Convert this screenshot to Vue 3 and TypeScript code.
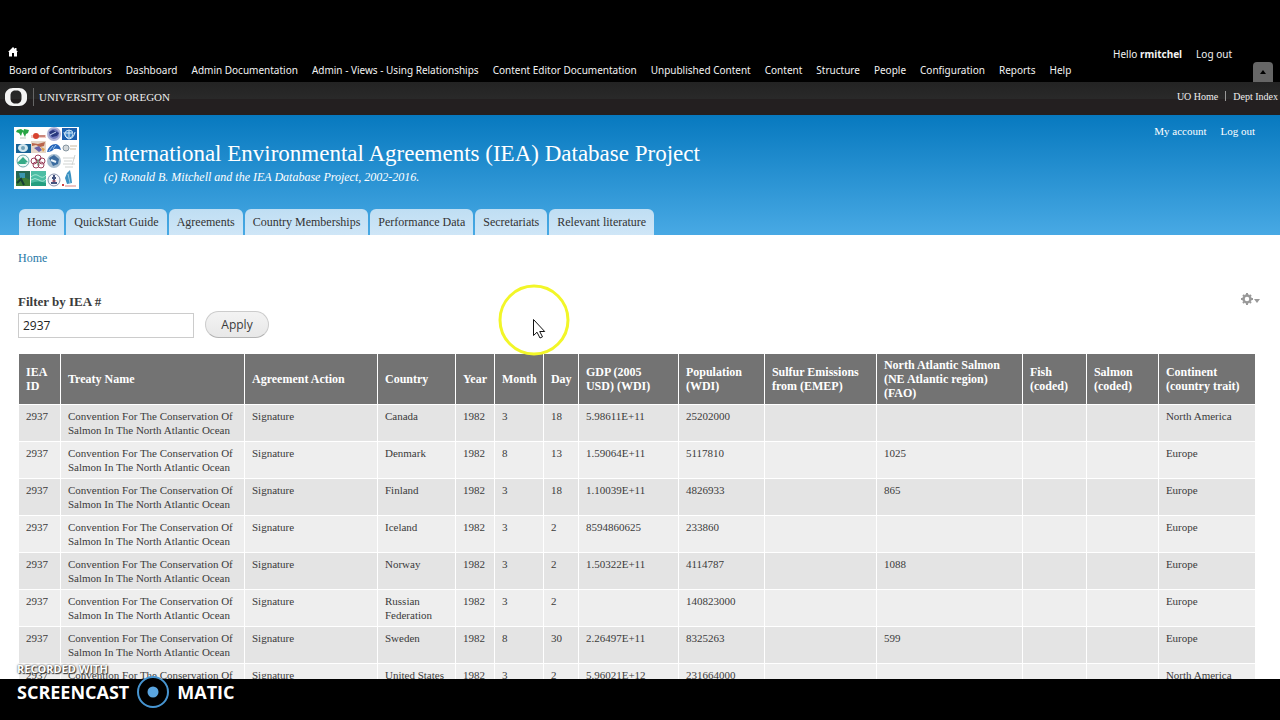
<script setup lang="ts">
import { ref } from 'vue'

interface Column {
  label: string
  width: number
}

const adminLinks: string[] = [
  'Board of Contributors', 'Dashboard', 'Admin Documentation', 'Admin - Views - Using Relationships',
  'Content Editor Documentation', 'Unpublished Content', 'Content', 'Structure', 'People',
  'Configuration', 'Reports', 'Help',
]

const tabs: string[] = [
  'Home', 'QuickStart Guide', 'Agreements', 'Country Memberships', 'Performance Data',
  'Secretariats', 'Relevant literature',
]

const columns: Column[] = [
  { label: 'IEA\nID', width: 42 },
  { label: 'Treaty Name', width: 184 },
  { label: 'Agreement Action', width: 133 },
  { label: 'Country', width: 78 },
  { label: 'Year', width: 39 },
  { label: 'Month', width: 49 },
  { label: 'Day', width: 35 },
  { label: 'GDP (2005\nUSD) (WDI)', width: 100 },
  { label: 'Population\n(WDI)', width: 86 },
  { label: 'Sulfur Emissions\nfrom (EMEP)', width: 112 },
  { label: 'North Atlantic Salmon\n(NE Atlantic region)\n(FAO)', width: 146 },
  { label: 'Fish\n(coded)', width: 64 },
  { label: 'Salmon\n(coded)', width: 72 },
  { label: 'Continent\n(country trait)', width: 97 },
]
const totalWidth = columns.reduce((sum, c) => sum + c.width, 0)

const treaty = 'Convention For The Conservation Of Salmon In The North Atlantic Ocean'

function record(country: string, month: string, day: string, gdp: string, population: string, salmon: string, continent: string): string[] {
  return ['2937', treaty, 'Signature', country, '1982', month, day, gdp, population, '', salmon, '', '', continent]
}

const rows: string[][] = [
  record('Canada', '3', '18', '5.98611E+11', '25202000', '', 'North America'),
  record('Denmark', '8', '13', '1.59064E+11', '5117810', '1025', 'Europe'),
  record('Finland', '3', '18', '1.10039E+11', '4826933', '865', 'Europe'),
  record('Iceland', '3', '2', '8594860625', '233860', '', 'Europe'),
  record('Norway', '3', '2', '1.50322E+11', '4114787', '1088', 'Europe'),
  record('Russian Federation', '3', '2', '', '140823000', '', 'Europe'),
  record('Sweden', '8', '30', '2.26497E+11', '8325263', '599', 'Europe'),
  record('United States', '3', '2', '5.96021E+12', '231664000', '', 'North America'),
]

const filter = ref('2937')
</script>

<template>
  <div class="page">
    <div class="toolbar">
      <div class="toolbar-top">
        <a href="#" class="home-link" aria-label="Home">
          <svg width="10" height="12" viewBox="0 0 10 12"><path d="M5 1 0 6h1v4.500h3V7h2v3.500h3V6h1L8.500 4.500V2H7v1z" fill="#fff" /></svg>
        </a>
        <div class="user-links">
          <a href="#">Hello <strong>rmitchel</strong></a>
          <a href="#">Log out</a>
        </div>
      </div>
      <nav class="admin-nav">
        <a v-for="link in adminLinks" :key="link" href="#">{{ link }}</a>
      </nav>
      <button class="toggle" type="button" aria-label="Hide shortcuts">
        <svg width="6" height="4" viewBox="0 0 6 4"><path d="M3 0l3 4H0z" fill="#000" /></svg>
      </button>
    </div>

    <div class="uo-bar">
      <a href="#" class="uo-brand">
        <svg class="uo-mark" width="22" height="18" viewBox="0 0 22 18">
          <path fill-rule="evenodd" fill="#f4f4f4" d="M8 0h6c4.500 0 8 3.500 8 7v4c0 3.500-3.500 7-8 7H8c-4.500 0-8-3.500-8-7V7c0-3.500 3.500-7 8-7zM10 2.500C7 2.500 5.500 5 5.500 7.500v3c0 2.500 1.500 5 4.500 5h2c3 0 4.500-2.500 4.500-5v-3c0-2.500-1.500-5-4.500-5z" />
        </svg>
        <span class="uo-name">UNIVERSITY OF OREGON</span>
      </a>
      <div class="uo-links">
        <a href="#">UO Home</a><span class="bar"></span><a href="#">Dept Index</a>
      </div>
    </div>

    <header class="header">
      <div class="account-links">
        <a href="#">My account</a>
        <a href="#">Log out</a>
      </div>
      <div class="branding">
        <svg class="site-logo" width="65" height="62" viewBox="0 0 65 62">
          <rect width="65" height="62" fill="#fff" />
          <path d="M3 3l4-1 3 2-2 2-1 3-2-3-3-1zM10 2l5 1-1 3-2 1-1 3-2-4z" fill="#27a544" />
          <path d="M6 11h6" stroke="#b9c4b9" />
          <path d="M17 8h15v3H17z" fill="#f3c9c2" /><circle cx="22" cy="9" r="3" fill="#d8422e" /><path d="M25 9h6" stroke="#a04439" />
          <circle cx="40" cy="7" r="6" fill="#7179bd" stroke="#aeb2d7" stroke-width="2" /><path d="M35 5l4-2 6 3-2 3-5 1z" fill="#29377e" /><path d="M36 8l6-3" stroke="#c4d5ef" />
          <rect x="48" y="1" width="15" height="12" fill="#1b5fae" /><circle cx="55" cy="7" r="4" fill="#3f86c9" stroke="#bfdcf2" /><path d="M50 5q1 6 5 7 5-1 6-7M55 3v7M52 6h6" fill="none" stroke="#d7ecfa" />
          <rect x="2" y="17" width="15" height="9" fill="#176295" /><ellipse cx="9" cy="21" rx="5" ry="4" fill="#d4e8ef" /><circle cx="9" cy="21" r="2" fill="#72a2b8" />
          <rect x="17" y="14" width="15" height="12" fill="#e5d6c7" /><path d="M18 16l6 1 7-2-1 4-4 1-4-2-4 1z" fill="#b9654c" /><path d="M20 21l5-2 3 4-3 2z" fill="#6a62a8" /><path d="M27 20l4 2-2 3z" fill="#e0a14e" />
          <path d="M33 25q2-8 9-8 4 1 5 6-4-2-7-1-2 3-7 3z" fill="#2766bb" /><path d="M35 24l4-5M39 22l3-4" stroke="#9cc7ec" />
          <circle cx="52" cy="21" r="3" fill="#d3d8db" stroke="#8695a0" /><path d="M56 19h7M56 22h6" stroke="#c8b99f" />
          <circle cx="9" cy="34" r="6" fill="#effaf6" stroke="#71a7ad" /><path d="M3 36l6-6 5 5-3 1 2 1H5z" fill="#35aa86" />
          <g fill="none" stroke="#9a3e5b"><circle cx="24" cy="31" r="3" /><circle cx="20" cy="34" r="3" /><circle cx="28" cy="34" r="3" /><circle cx="22" cy="38" r="3" /><circle cx="27" cy="38" r="3" /></g><path d="M24 32v6" stroke="#5b9a68" />
          <circle cx="40" cy="34" r="7" fill="#a6bdd0" /><path d="M35 31l5-3 5 4-1 5-5 2-2-4z" fill="#3b6b9f" /><path d="M37 33l5 2" stroke="#eaf3fa" stroke-width="2" />
          <path d="M49 31h12M50 34h8M49 37h12M51 40h8M61 28l-3 10" stroke="#d0d3d1" />
          <rect x="2" y="44" width="14" height="15" fill="#256752" /><path d="M2 52l6-3 8 4v6H2z" fill="#3d7c36" /><path d="M5 46h6v5H6z" fill="#3b96b0" /><path d="M3 56l4-4 3 6" fill="none" stroke="#163e36" stroke-width="2" />
          <rect x="17" y="44" width="15" height="15" fill="#4dbda4" /><path d="M17 50q4-4 8-1t7-1M17 53q4-3 8 0t7-1" fill="none" stroke="#a4e6d2" /><path d="M17 56q7-3 15 0v3H17z" fill="#249e80" />
          <circle cx="40" cy="53" r="6" fill="#f6f6fa" stroke="#8891ad" /><path d="M40 48v8M38 51h4M37 56h6" stroke="#43537f" stroke-width="2" /><path d="M38 54h4" stroke="#cc5865" />
          <path d="M53 57l-2-6 2-5 3-3 1 5 1 8z" fill="#3a91c2" /><path d="M54 47l2 9" stroke="#9ccde5" /><path d="M48 58h2" stroke="#cf3e3e" stroke-width="2" /><path d="M51 59h11" stroke="#d58585" />
        </svg>
        <div class="titles">
          <h1>International Environmental Agreements (IEA) Database Project</h1>
          <p>(c) Ronald B. Mitchell and the IEA Database Project, 2002-2016.</p>
        </div>
      </div>
      <nav class="tabs">
        <a v-for="tab in tabs" :key="tab" href="#">{{ tab }}</a>
      </nav>
    </header>

    <main class="content">
      <nav class="breadcrumb"><a href="#">Home</a></nav>
      <div class="filter-area">
        <form class="filter" @submit.prevent>
          <label for="iea-filter">Filter by IEA #</label>
          <div class="filter-row">
            <input id="iea-filter" v-model="filter" type="text">
            <button type="submit">Apply</button>
          </div>
        </form>
        <button class="gear" type="button" aria-label="Configure view">
          <svg width="20" height="12" viewBox="0 1 20 12">
            <circle cx="6" cy="7" r="3.500" fill="none" stroke="#999" stroke-width="2.500" />
            <path d="M6 1v2M6 11v2M0 7h2M10 7h2M2 3l1 1M9 10l1 1M2 11l1-1M9 4l1-1" stroke="#999" stroke-width="2" />
            <path d="M13 7h6l-3 4z" fill="#999" />
          </svg>
        </button>
      </div>

      <table>
        <colgroup>
          <col v-for="c in columns" :key="c.label" :style="{ width: (c.width / totalWidth) * 100 + '%' }">
        </colgroup>
        <thead>
          <tr><th v-for="c in columns" :key="c.label" scope="col">{{ c.label }}</th></tr>
        </thead>
        <tbody>
          <tr v-for="(row, r) in rows" :key="r">
            <td v-for="(cell, i) in row" :key="i">{{ cell }}</td>
          </tr>
        </tbody>
      </table>
    </main>

    <footer class="letterbox"></footer>

    <div class="watermark">
      <span class="recorded">RECORDED WITH</span>
      <div class="brand">
        <span>SCREENCAST</span>
        <svg width="34" height="34" viewBox="0 0 34 34">
          <circle cx="17" cy="17" r="15" fill="#000" stroke="#4795d1" stroke-width="2" />
          <circle cx="17" cy="17" r="5.500" fill="#5aa5e0" />
        </svg>
        <span>MATIC</span>
      </div>
    </div>

    <svg class="pointer" width="72" height="72" viewBox="0 0 72 72">
      <circle cx="36" cy="36" r="34" fill="none" stroke="#f2f628" stroke-width="3" />
      <path d="M35.500 35.500v16l3.500-3.300 3 5.800 2.500-1.200-2.800-5.300h5z" fill="#fff" stroke="#111" />
    </svg>
  </div>
</template>

<style>
html,
body {
  background: #000;
}
</style>

<style scoped>
.page {
  position: relative;
  display: flex;
  flex-direction: column;
  height: 100vh;
  overflow: hidden;
  box-sizing: border-box;
  padding-top: 40px;
  background: #000;
  color: #3b3b3b;
  font-family: "Liberation Serif", serif;
}

a {
  color: inherit;
  text-decoration: none;
}

button {
  margin: 0;
  cursor: pointer;
}

.toolbar {
  position: relative;
  flex: none;
  padding: 6px 48px 4px 8px;
  color: #f2f2f2;
  font: 10px/16px "Noto Sans", sans-serif;
}

.toolbar-top {
  display: flex;
  justify-content: space-between;
}

.home-link {
  display: flex;
  align-items: flex-start;
}

.user-links,
.admin-nav {
  display: flex;
  gap: 14px;
  white-space: nowrap;
}

.admin-nav {
  padding-left: 1px;
}

.toggle {
  position: absolute;
  right: 7px;
  bottom: 0;
  display: flex;
  align-items: center;
  justify-content: center;
  width: 20px;
  height: 20px;
  padding: 0;
  border: 0;
  border-radius: 4px 4px 0 0;
  background: #666;
}

.uo-bar {
  flex: none;
  display: flex;
  justify-content: space-between;
  box-sizing: border-box;
  height: 33px;
  padding: 6px 2px 0 5px;
  background: linear-gradient(#232323, #292929 50%, #231f20 51%);
  color: #eee;
}

.uo-brand {
  display: flex;
  align-items: center;
  height: 18px;
}

.uo-name {
  margin-left: 6px;
  padding-left: 5px;
  border-left: 1px solid #666;
  font-size: 11px;
  line-height: 18px;
}

.uo-links {
  display: flex;
  align-items: center;
  height: 16px;
  font-size: 10px;
}

.bar {
  width: 1px;
  height: 10px;
  margin: 0 7px;
  background: #999;
}

.header {
  flex: none;
  padding: 8px 25px 0 14px;
  background: linear-gradient(#0779bf, #48a9e4);
  color: #fff;
}

.account-links {
  display: flex;
  justify-content: flex-end;
  gap: 14px;
  height: 4px;
  font-size: 11px;
  line-height: 16px;
}

.branding {
  display: flex;
  gap: 25px;
}

.titles {
  padding-top: 13px;
}

h1 {
  margin: 0;
  font-size: 23px;
  font-weight: 400;
  line-height: 28px;
}

.titles p {
  margin: 0;
  font-size: 12px;
  font-style: italic;
  line-height: 18px;
}

.tabs {
  display: flex;
  gap: 2px;
  padding: 20px 0 0 5px;
}

.tabs a {
  padding: 0 8px;
  border-radius: 6px 6px 0 0;
  background: linear-gradient(#bfdef3, #cfe6f7);
  color: #333;
  font-size: 12px;
  line-height: 26px;
  white-space: nowrap;
}

.content {
  flex: 1;
  min-height: 0;
  overflow: hidden;
  padding: 13px 24px 0 18px;
  background: #fff;
}

.breadcrumb {
  color: #2779a7;
  font-size: 12px;
  line-height: 20px;
}

.filter-area {
  display: flex;
  justify-content: space-between;
  margin: 25px -5px 15px 0;
}

.filter label {
  display: block;
  font-size: 13px;
  font-weight: 700;
  line-height: 18px;
}

.filter-row {
  display: flex;
  align-items: flex-end;
  gap: 11px;
}

.filter input {
  box-sizing: border-box;
  width: 176px;
  height: 25px;
  padding: 0 4px;
  border: 1px solid #ccc;
  color: #222;
  font: 12px "Open Sans", sans-serif;
}

.filter-row button {
  width: 64px;
  height: 27px;
  padding: 0;
  border: 1px solid #ccc;
  border-bottom-color: #b4b4b4;
  border-radius: 14px;
  background: linear-gradient(#f3f3f3, #e8e8e8);
  color: #3a3a3a;
  font: 12px "Open Sans", sans-serif;
}

.gear {
  align-self: flex-start;
  display: flex;
  padding: 0;
  border: 0;
  background: none;
}

table {
  width: 100%;
  table-layout: fixed;
  border-collapse: collapse;
}

th,
td {
  border: 1px solid #fff;
  padding: 4px 2px 4px 7px;
  text-align: left;
}

th {
  background: #737373;
  color: #fff;
  font-size: 12px;
  line-height: 14px;
  white-space: pre-line;
}

td {
  font-size: 11px;
  line-height: 14px;
  vertical-align: top;
}

tbody tr:nth-child(odd) {
  background: #e4e4e4;
}

tbody tr:nth-child(even) {
  background: #eee;
}

.letterbox {
  flex: none;
  height: 41px;
  background: #000;
}

.watermark {
  position: absolute;
  left: 17px;
  bottom: 11px;
  color: #fff;
  font-family: "Open Sans", sans-serif;
  font-weight: 700;
}

.recorded {
  display: block;
  height: 12px;
  font-size: 11px;
  line-height: 12px;
  text-shadow: 1px 1px 1px #333, 0 0 2px #333;
}

.brand {
  display: flex;
  align-items: center;
  gap: 7px;
  font-size: 18px;
  line-height: 34px;
}

.pointer {
  position: absolute;
  left: 498px;
  top: 284px;
  pointer-events: none;
}
</style>
